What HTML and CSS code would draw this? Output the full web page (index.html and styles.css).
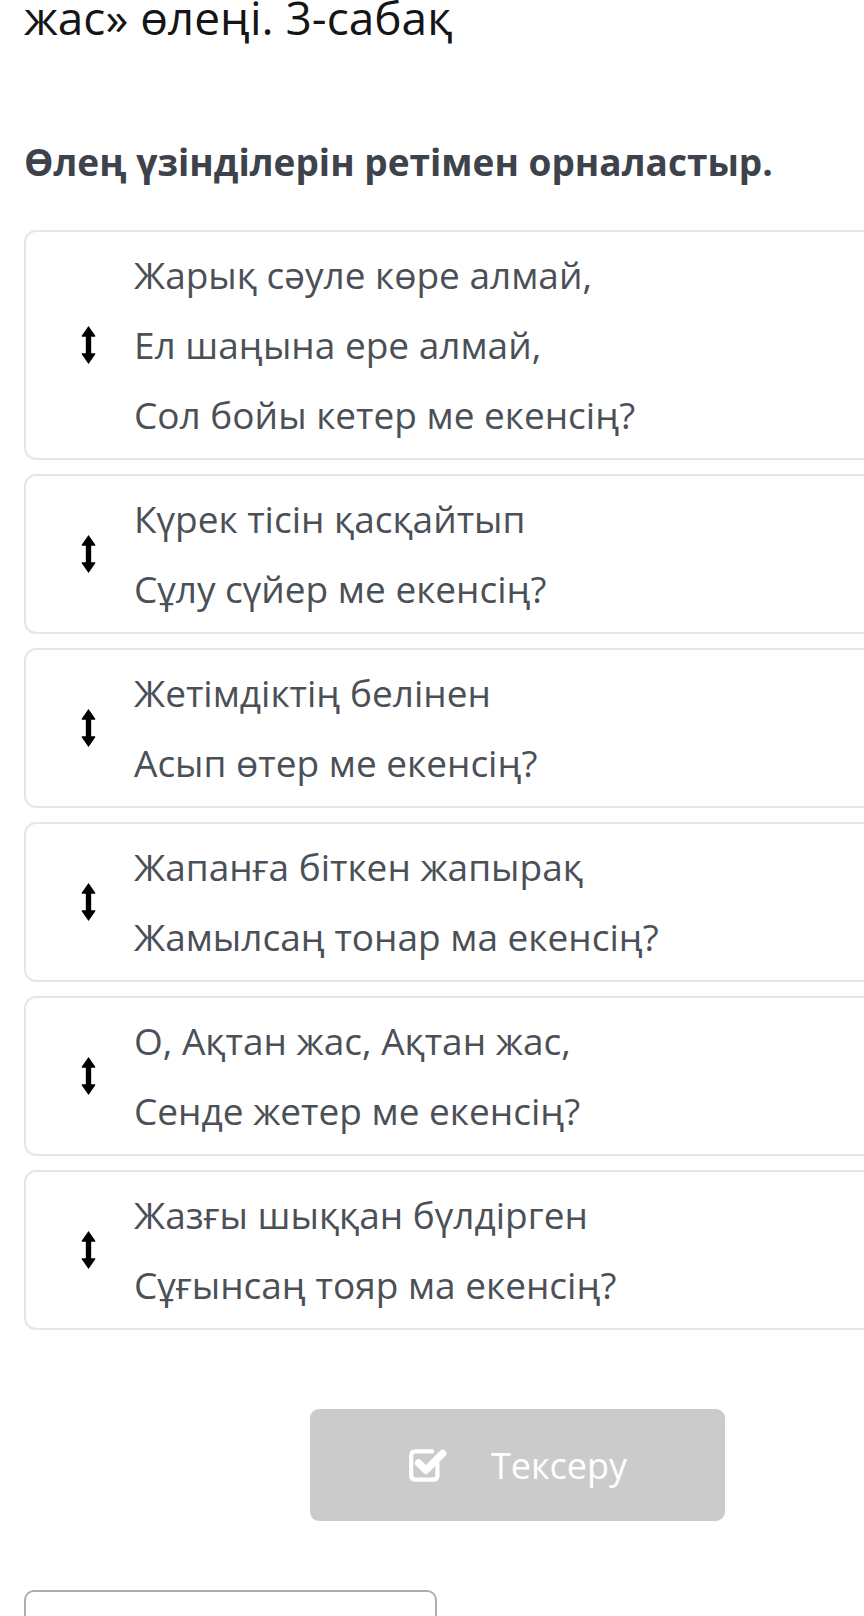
FILE: index.html
```html
<!DOCTYPE html>
<html lang="kk">
<head>
<meta charset="utf-8">
<title>Өлең үзінділерін ретімен орналастыр</title>
<link rel="stylesheet" href="styles.css">
</head>
<body>
<div class="page">
  <h1 class="title">жас» өлеңі. 3-сабақ</h1>
  <h2 class="task">Өлең үзінділерін ретімен орналастыр.</h2>
  <div class="list">
    <div class="card">
      <span class="handle"><svg viewBox="0 0 14 37" width="15" height="38"><path d="M7 0 L13.6 9.6 Q14 10.5 13 10.5 L9.6 10.5 L9.6 26.5 L13 26.5 Q14 26.5 13.6 27.4 L7 37 L0.4 27.4 Q0 26.5 1 26.5 L4.4 26.5 L4.4 10.5 L1 10.5 Q0 10.5 0.4 9.6 Z" fill="#000"/></svg></span>
      <div class="lines">
        <p>Жарық сәуле көре алмай,</p>
        <p>Ел шаңына ере алмай,</p>
        <p>Сол бойы кетер ме екенсің?</p>
      </div>
    </div>
    <div class="card">
      <span class="handle"><svg viewBox="0 0 14 37" width="15" height="38"><path d="M7 0 L13.6 9.6 Q14 10.5 13 10.5 L9.6 10.5 L9.6 26.5 L13 26.5 Q14 26.5 13.6 27.4 L7 37 L0.4 27.4 Q0 26.5 1 26.5 L4.4 26.5 L4.4 10.5 L1 10.5 Q0 10.5 0.4 9.6 Z" fill="#000"/></svg></span>
      <div class="lines">
        <p>Күрек тісін қасқайтып</p>
        <p>Сұлу сүйер ме екенсің?</p>
      </div>
    </div>
    <div class="card">
      <span class="handle"><svg viewBox="0 0 14 37" width="15" height="38"><path d="M7 0 L13.6 9.6 Q14 10.5 13 10.5 L9.6 10.5 L9.6 26.5 L13 26.5 Q14 26.5 13.6 27.4 L7 37 L0.4 27.4 Q0 26.5 1 26.5 L4.4 26.5 L4.4 10.5 L1 10.5 Q0 10.5 0.4 9.6 Z" fill="#000"/></svg></span>
      <div class="lines">
        <p>Жетімдіктің белінен</p>
        <p>Асып өтер ме екенсің?</p>
      </div>
    </div>
    <div class="card">
      <span class="handle"><svg viewBox="0 0 14 37" width="15" height="38"><path d="M7 0 L13.6 9.6 Q14 10.5 13 10.5 L9.6 10.5 L9.6 26.5 L13 26.5 Q14 26.5 13.6 27.4 L7 37 L0.4 27.4 Q0 26.5 1 26.5 L4.4 26.5 L4.4 10.5 L1 10.5 Q0 10.5 0.4 9.6 Z" fill="#000"/></svg></span>
      <div class="lines">
        <p>Жапанға біткен жапырақ</p>
        <p>Жамылсаң тонар ма екенсің?</p>
      </div>
    </div>
    <div class="card">
      <span class="handle"><svg viewBox="0 0 14 37" width="15" height="38"><path d="M7 0 L13.6 9.6 Q14 10.5 13 10.5 L9.6 10.5 L9.6 26.5 L13 26.5 Q14 26.5 13.6 27.4 L7 37 L0.4 27.4 Q0 26.5 1 26.5 L4.4 26.5 L4.4 10.5 L1 10.5 Q0 10.5 0.4 9.6 Z" fill="#000"/></svg></span>
      <div class="lines">
        <p>О, Ақтан жас, Ақтан жас,</p>
        <p>Сенде жетер ме екенсің?</p>
      </div>
    </div>
    <div class="card">
      <span class="handle"><svg viewBox="0 0 14 37" width="15" height="38"><path d="M7 0 L13.6 9.6 Q14 10.5 13 10.5 L9.6 10.5 L9.6 26.5 L13 26.5 Q14 26.5 13.6 27.4 L7 37 L0.4 27.4 Q0 26.5 1 26.5 L4.4 26.5 L4.4 10.5 L1 10.5 Q0 10.5 0.4 9.6 Z" fill="#000"/></svg></span>
      <div class="lines">
        <p>Жазғы шыққан бүлдірген</p>
        <p>Сұғынсаң тояр ма екенсің?</p>
      </div>
    </div>
  </div>
  <div class="actions">
    <button class="check" type="button">
      <svg class="check-icon" viewBox="0 0 40 36" width="42" height="38"><path d="M29 17 V28 Q29 32 25 32 H8 Q4 32 4 28 V9 Q4 5 8 5 H24" fill="none" stroke="#fff" stroke-width="4" stroke-linecap="round"/><path d="M11 16 L18 23 L34 7" fill="none" stroke="#fff" stroke-width="7" stroke-linecap="round" stroke-linejoin="round"/></svg>
      <span>Тексеру</span>
    </button>
  </div>
  <div class="next-box"></div>
</div>
</body>
</html>
```

FILE: styles.css
```css
html, body {
  margin: 0;
  padding: 0;
  background: #fff;
  overflow: hidden;
}

.page {
  width: 986px;
  padding-left: 24px;
  font-family: "Open Sans", "Noto Sans", sans-serif;
}

.title {
  margin: -13px 0 0 0;
  font-size: 46px;
  line-height: 60px;
  font-weight: 400;
  color: #151515;
}

.task {
  margin: 90px 0 0 0;
  font-size: 37px;
  line-height: 50px;
  font-weight: 700;
  color: #3d424b;
}

.list {
  margin-top: 43px;
  display: flex;
  flex-direction: column;
  gap: 14px;
}

.card {
  display: flex;
  align-items: center;
  border: 2px solid #e6e6e6;
  border-radius: 12px;
  padding: 8px 0 8px 55px;
  background: #fff;
}

.handle {
  display: flex;
  width: 15px;
  margin-right: 38px;
}

.lines p {
  margin: 0;
  font-size: 37px;
  line-height: 70px;
  color: #4b5057;
}

.actions {
  margin-top: 79px;
  display: flex;
  justify-content: center;
}

.check {
  width: 415px;
  height: 112px;
  border: none;
  border-radius: 9px;
  background: #cbcbcb;
  display: flex;
  align-items: center;
  justify-content: center;
  gap: 42px;
  font-family: "Open Sans", "Noto Sans", sans-serif;
  font-size: 36px;
  color: #fff;
  padding: 0;
}

.check-icon {
  display: block;
}

.next-box {
  margin-top: 69px;
  width: 409px;
  height: 120px;
  border: 2px solid #a9aeb1;
  border-radius: 10px;
}
```
